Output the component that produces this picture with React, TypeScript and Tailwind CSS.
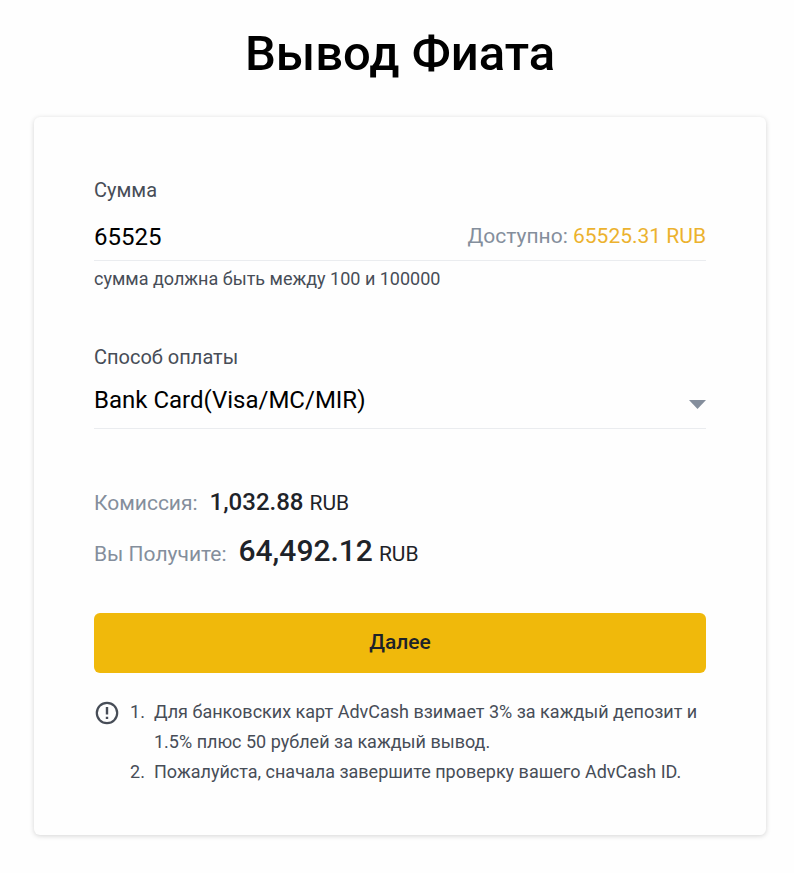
import { useState } from "react";

const methods = ["Bank Card(Visa/MC/MIR)", "AdvCash"]

const notes = [
    "Для банковских карт AdvCash взимает 3% за каждый депозит и 1.5% плюс 50 рублей за каждый вывод.",
    "Пожалуйста, сначала завершите проверку вашего AdvCash ID.",
]

const WarningIcon = () => (
    <svg viewBox="0 0 24 24" className="w-6 h-6 mt-1 ml-px shrink-0" fill="none" stroke="#474d57" aria-hidden="true">
        <circle cx="12" cy="12" r="10.2" strokeWidth="2.2" />
        <path d="M12 6v7.5M12 15.7v2.4" strokeWidth="2.4" />
    </svg>
)

const App = () => {
    const [amount, setAmount] = useState("65525")
    const [method, setMethod] = useState(methods[0])

    return (
        <main className="min-h-screen bg-[#fefefe] pl-[34px] pr-7 pt-6 pb-9 font-[Roboto,sans-serif] text-[#474d57]">
            <h1 className="text-center text-[49px] leading-[60px] font-medium text-black">Вывод Фиата</h1>

            <form
                onSubmit={(e) => e.preventDefault()}
                className="mt-[33px] rounded-md bg-[#fefefe] px-[60px] pt-[58px] pb-12 shadow-[0_1px_5px_rgba(0,0,0,0.17)]"
            >
                <label htmlFor="amount" className="block text-xl leading-[30px]">Сумма</label>
                <div className="mt-1 flex h-[52px] items-center border-b border-[#eaecef] pt-1">
                    <input
                        id="amount"
                        type="text"
                        value={amount}
                        onChange={(e) => setAmount(e.target.value)}
                        className="min-w-0 flex-1 bg-transparent text-2xl text-black outline-none"
                    />
                    <span className="text-[21px] text-[#848e9c]">
                        Доступно: <span className="text-[#ecb22e]">65525.31 RUB</span>
                    </span>
                </div>
                <p className="mt-[3px] text-lg leading-[30px]">сумма должна быть между 100 и 100000</p>

                <label htmlFor="method" className="mt-12 block text-xl leading-[30px]">Способ оплаты</label>
                <div className="mt-1 flex h-[53px] items-center border-b border-[#eaecef]">
                    <select
                        id="method"
                        value={method}
                        onChange={(e) => setMethod(e.target.value)}
                        className="-mr-[17px] min-w-0 flex-1 appearance-none bg-transparent pr-5 pb-1 text-2xl text-black outline-none"
                    >
                        {methods.map((m) => (
                            <option key={m}>{m}</option>
                        ))}
                    </select>
                    <svg viewBox="0 0 34 18" className="pointer-events-none mt-1 w-[17px] h-[9px]" fill="#848e9c" aria-hidden="true">
                        <path d="M0 0h34L17 18z" />
                    </svg>
                </div>

                <p className="mt-[55px] flex items-baseline text-[21px] leading-9">
                    <span className="text-[#848e9c]">Комиссия:</span>
                    <span className="ml-3 text-2xl leading-9 font-medium text-[#1e2329]">1,032.88</span>
                    <span className="ml-1.5 text-[#1e2329]">RUB</span>
                </p>
                <p className="mt-2.5 flex items-baseline text-[21px] leading-10">
                    <span className="text-[#848e9c]">Вы Получите:</span>
                    <span className="ml-3 text-3xl leading-10 font-medium text-[#1e2329]">64,492.12</span>
                    <span className="ml-1.5 text-[#1e2329]">RUB</span>
                </p>

                <button type="submit" className="mt-[39px] h-[60px] w-full rounded-md bg-[#f0b90b] text-[21px] font-medium text-[#1e2329]">
                    Далее
                </button>

                <div className="mt-6 flex gap-[11px]">
                    <WarningIcon />
                    <ol className="flex-1 text-lg leading-[30px]">
                        {notes.map((note, i) => (
                            <li key={note} className="flex">
                                <span className="w-6 shrink-0">{i + 1}.</span>
                                <span>{note}</span>
                            </li>
                        ))}
                    </ol>
                </div>
            </form>
        </main>
    )
}

export default App
